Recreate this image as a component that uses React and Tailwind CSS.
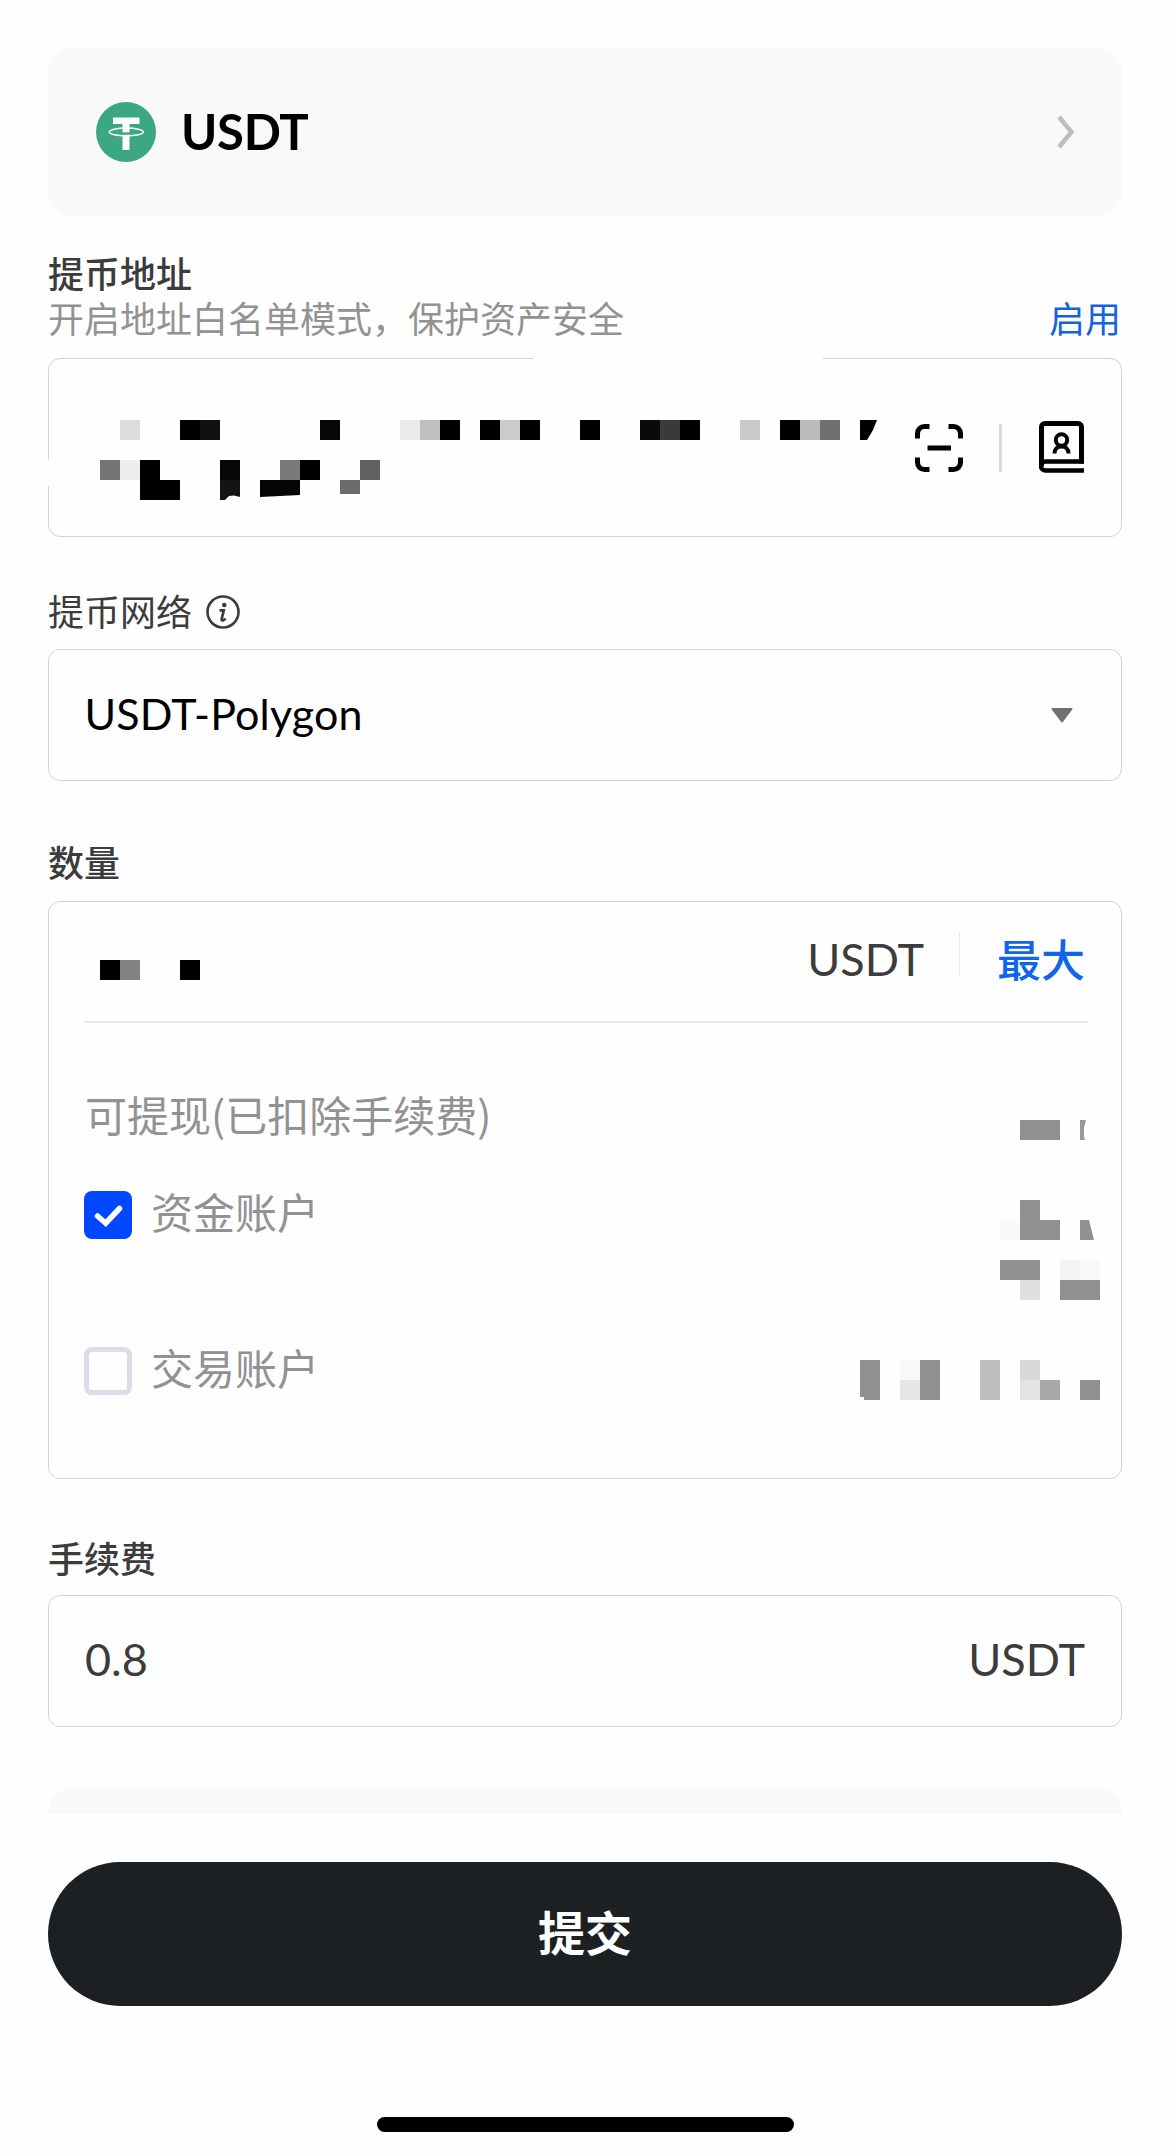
const CJK = 'font-["Noto_Sans_CJK_SC",sans-serif]';

// Redacted values: each cell is [x, y, width, height, fill] on a 20px raster.
function Mosaic({ x, y, width, height, cells, cuts = [], className = '' }) {
  return (
    <svg
      className={'block shrink-0 ' + className}
      width={width}
      height={height}
      viewBox={`${x} ${y} ${width} ${height}`}
      shapeRendering="crispEdges"
      aria-hidden="true"
    >
      {cells.map(([cx, cy, w, h, fill], i) => (
        <rect key={i} x={cx} y={cy} width={w} height={h} fill={fill} />
      ))}
      {cuts.map(([points, fill], i) => (
        <polygon key={i} points={points} fill={fill} shapeRendering="auto" />
      ))}
    </svg>
  );
}

const addressCells = [
  [120, 420, 20, 20, '#dddddd'], [180, 420, 20, 20, '#000'], [200, 420, 20, 20, '#111111'],
  [320, 420, 20, 20, '#060606'], [400, 420, 20, 20, '#ebebeb'], [420, 420, 20, 20, '#c0c0c0'],
  [440, 420, 20, 20, '#000'], [480, 420, 20, 20, '#000'], [500, 420, 20, 20, '#cbcbcb'],
  [520, 420, 20, 20, '#000'], [580, 420, 20, 20, '#000'], [640, 420, 20, 20, '#0a0a0a'],
  [660, 420, 20, 20, '#3a3a3a'], [680, 420, 20, 20, '#000'], [740, 420, 20, 20, '#cacaca'],
  [780, 420, 20, 20, '#000'], [800, 420, 20, 20, '#bcbcbc'], [820, 420, 20, 20, '#707070'],
  [100, 460, 20, 20, '#757575'], [120, 460, 20, 20, '#eeeeee'], [140, 460, 20, 40, '#000'],
  [160, 480, 20, 20, '#000'], [220, 460, 20, 20, '#060606'], [280, 460, 20, 20, '#7a7a7a'],
  [300, 460, 20, 20, '#000'], [360, 460, 20, 20, '#616161'], [340, 480, 20, 14, '#6b6b6b'],
];
const addressCuts = [
  ['860,420 877,420 873,430 867,440 860,440', '#000'],
  ['220,480 240,480 240,497 234,495.5 229,496 225,500 220,500', '#141414'],
  ['260,480 300,480 300,495 260,497', '#050505'],
];
const G = '#919191';

function Panel({ className = '', children }) {
  return (
    <section className={'relative rounded-[12px] border border-[#d2d2d2] bg-[#fefefe] ' + className}>
      {children}
    </section>
  );
}

function Label({ className = '', children }) {
  return <div className={`${CJK} text-[36px] leading-[44px] text-[#3c3c3c] ` + className}>{children}</div>;
}

function Tether() {
  return (
    <svg className="size-[60px]" viewBox="0 0 60 60" fill="none" aria-hidden="true">
      <circle cx="30" cy="30" r="30" fill="#3ba783" />
      <path d="M17 15.5h26.5v6.5h-10v26h-7V22H17z" fill="#fff" />
      <path d="M26 31.600h8" stroke="#3ba783" strokeWidth="2.400" />
      <ellipse cx="30.3" cy="30" rx="17" ry="3.9" stroke="#fff" strokeWidth="1.5" />
    </svg>
  );
}

function ScanIcon() {
  return (
    <svg className="size-[48px]" viewBox="0 0 48 48" fill="none" stroke="#000" strokeWidth="5" aria-hidden="true">
      <path d="M2.5 14.5v-5a7 7 0 0 1 7-7h5M33.500 2.500h5a7 7 0 0 1 7 7v5M45.500 33.500v5a7 7 0 0 1-7 7h-5M14.500 45.500h-5a7 7 0 0 1-7-7v-5M12.500 24h23.500" />
    </svg>
  );
}

function ContactBook() {
  return (
    <svg className="h-[52px] w-[46px]" viewBox="0 0 46 52" fill="none" stroke="#000" strokeWidth="5" aria-hidden="true">
      <path d="M2.500 45V6a3.500 3.500 0 0 1 3.500-3.500h33a3.500 3.500 0 0 1 3.500 3.500v36.500" />
      <path d="M45 40.500H6.500a4 4 0 0 0 0 9H45" strokeWidth="4.500" />
      <circle cx="22.500" cy="19" r="5.700" strokeWidth="4" />
      <path d="M15.500 32.500c0-4.800 3-7 7-7s7 2.200 7 7" strokeWidth="4" />
    </svg>
  );
}

function InfoIcon() {
  return (
    <svg className="mt-[4px] size-[34px]" viewBox="0 0 34 34" fill="none" stroke="#3c3c3c" aria-hidden="true">
      <circle cx="17" cy="17" r="15.500" strokeWidth="2.600" />
      <circle cx="18.300" cy="10" r="2.300" fill="#3c3c3c" stroke="none" />
      <path d="M13.500 15.300h4.300l-2.100 8.600c-.3 1.500.4 1.800 1.300 1.500.9-.3 1.700-.9 2.500-1.800" strokeWidth="2.700" />
    </svg>
  );
}

export default function App() {
  return (
    <main className="flex h-[2156px] w-[1170px] flex-col overflow-hidden bg-[#fefefe] px-[48px] pt-[48px]">
      <section className="flex h-[168px] shrink-0 items-center rounded-[24px] bg-[#f9f9f9] pr-[47px] pl-[48px]">
        <Tether />
        <span className="mb-[3px] ml-[25px] font-['Lato'] text-[49px] leading-[60px] font-bold tracking-[-0.3px] text-black">USDT</span>
        <svg className="ml-auto h-[34px] w-[18px]" viewBox="0 0 18 34" fill="none" stroke="#bdbdbd" strokeWidth="4.500" aria-hidden="true">
          <path d="M2 2l12.500 15L2 32" />
        </svg>
      </section>

      <Label className="mt-[34px] font-medium">提币地址</Label>
      <div className={`${CJK} flex h-[46px] justify-between text-[36px] leading-[46px] text-[#929292]`}>
        <span>开启地址白名单模式，保护资产安全</span>
        <button className="mr-[1px] text-[#1463dc]">启用</button>
      </div>
      <Panel className="mt-[18px] flex h-[179px] shrink-0">
        {/* Parts of the outline wiped out by the redaction */}
        <span className="absolute -top-[3px] left-[484px] h-[6px] w-[290px] bg-[#fefefe]" />
        <span className="absolute top-[101px] -left-[3px] h-[26px] w-[6px] bg-[#fefefe]" />
        <Mosaic x={100} y={420} width={780} height={80} cells={addressCells} cuts={addressCuts} className="mt-[61px] ml-[51px]" />
        <div className="mt-[62px] ml-[35px] flex h-[52px] items-start">
          <span className="pt-[3px]"><ScanIcon /></span>
          <span className="mt-[3px] ml-[36px] h-[48px] w-[3px] bg-[#d9d9d9]" />
          <span className="ml-[37px]"><ContactBook /></span>
        </div>
      </Panel>

      <div className="mt-[51px] flex h-[44px] items-center gap-[14px]">
        <Label>提币网络</Label>
        <InfoIcon />
      </div>
      <Panel className="mt-[17px] flex h-[132px] shrink-0 items-center justify-between pr-[48px] pl-[35.500px]">
        <span className="mb-[3px] font-['Lato'] text-[43px] leading-[60px] tracking-[0.150px] text-black">USDT-Polygon</span>
        <svg className="h-[15px] w-[22px]" viewBox="0 0 22 15" aria-hidden="true">
          <path d="M1.500 1h19L11 13.500z" fill="#707070" stroke="#707070" strokeWidth="2" strokeLinejoin="round" />
        </svg>
      </Panel>

      <Label className="mt-[58px] font-medium">数量</Label>
      <Panel className="mt-[18px] h-[578px] shrink-0 pr-[33px] pl-[35px]">
        <div className="flex h-[121px] border-b-2 border-[#e9e9e9]">
          <Mosaic
            x={100} y={960} width={100} height={20} className="mt-[58px] ml-[16px]"
            cells={[[100, 960, 20, 20, '#000'], [120, 960, 20, 20, '#828282'], [180, 960, 20, 20, '#000']]}
          />
          <span className="mt-[27px] ml-auto font-['Lato'] text-[45px] leading-[60px] text-[#3c3c3c]">USDT</span>
          <span className="mt-[30px] ml-[35px] h-[45px] w-px bg-[#e8e8e8]" />
          <button className={`${CJK} mt-[26px] mr-[3px] ml-[37px] h-[60px] text-[44px] leading-[60px] font-medium text-[#0f66ea]`}>最大</button>
        </div>
        <div className="mt-[61px] flex h-[60px]">
          <span className={`${CJK} ml-px text-[42px] leading-[60px] text-[#929292]`}>可提现(已扣除手续费)</span>
          <Mosaic
            x={1020} y={1120} width={68} height={20} className="mt-[36px] ml-auto"
            cells={[[1020, 1120, 40, 20, G]]}
            cuts={[['1080,1120 1086,1120 1084,1128 1084,1137 1085,1140 1080,1140', '#999999']]}
          />
        </div>
        <label className="mt-[41px] flex h-[60px] items-center">
          <svg className="size-[48px]" viewBox="0 0 48 48" fill="none" aria-hidden="true">
            <rect width="48" height="48" rx="8" fill="#0048ff" />
            <path d="M13.500 25l8.200 7.200L35.500 17.500" stroke="#fff" strokeWidth="5.500" strokeLinecap="round" />
          </svg>
          <span className={`${CJK} mb-[8px] ml-[19px] text-[42px] leading-[60px] text-[#929292]`}>资金账户</span>
          <Mosaic
            x={1000} y={1200} width={100} height={100} className="-mr-[12px] ml-auto translate-y-[35px]"
            cells={[
              [1020, 1200, 20, 40, G], [1040, 1220, 20, 20, G], [1000, 1220, 20, 20, '#fafafa'],
              [1000, 1260, 40, 20, G], [1020, 1280, 20, 20, '#dfdfdf'], [1060, 1260, 20, 20, '#f3f3f3'],
              [1080, 1260, 20, 20, '#f9f9f9'], [1060, 1280, 40, 20, G],
            ]}
            cuts={[['1080,1220 1089,1220 1094,1240 1080,1240', G]]}
          />
        </label>
        <label className="mt-[96px] flex h-[60px] items-center">
          <span className="size-[48px] rounded-[8px] border-[5px] border-[#dddbe7]" />
          <span className={`${CJK} mb-[8px] ml-[19px] text-[42px] leading-[60px] text-[#929292]`}>交易账户</span>
          <Mosaic
            x={860} y={1360} width={240} height={40} className="-mr-[12px] ml-auto translate-y-[9px]"
            cells={[
              [860, 1360, 20, 37, G], [864, 1397, 16, 3, G], [900, 1360, 20, 20, '#f8f8f8'],
              [900, 1380, 20, 20, '#e6e6e6'], [920, 1360, 20, 40, G], [980, 1360, 20, 40, '#bebebe'],
              [1020, 1360, 20, 20, '#d8d8d8'], [1020, 1380, 20, 20, '#e3e3e3'],
              [1040, 1380, 20, 20, '#a9a9a9'], [1080, 1380, 20, 20, G],
            ]}
          />
        </label>
      </Panel>

      <Label className="mt-[56px] font-medium">手续费</Label>
      <Panel className="mt-[16px] flex h-[132px] shrink-0 items-center justify-between pr-[36px] pb-[4px] pl-[36px] font-['Lato'] text-[45px] leading-[60px] text-[#3c3c3c]">
        <span>0.8</span>
        <span>USDT</span>
      </Panel>

      <div className="mt-[61px] h-[26px] shrink-0 rounded-t-[24px] bg-[#f9f9f9]" />
      <button className={`${CJK} mt-[48px] h-[144px] shrink-0 rounded-full bg-[#1c2023] pb-[7px] text-[47px] leading-[60px] font-bold text-white`}>提交</button>
      <div className="mt-[111px] h-[15px] w-[417px] shrink-0 self-center rounded-full bg-black" />
    </main>
  );
}
